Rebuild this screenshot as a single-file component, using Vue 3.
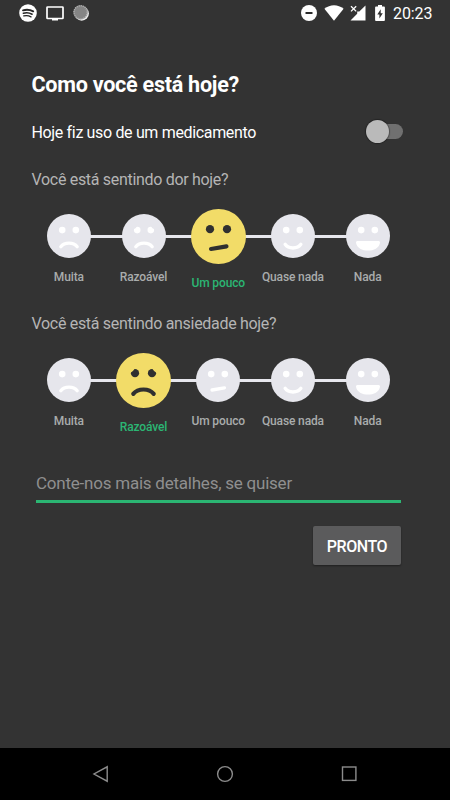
<template>
  <div class="screen">
    <header class="status-bar">
      <div class="status-bar__left">
        <svg class="icon-spotify" viewBox="0 0 18 18">
          <circle cx="9" cy="9" r="8.8" fill="#fff" />
          <g fill="none" stroke="#262626" stroke-linecap="round">
            <path d="M4 6.300c3.500-1 7-.7 10.200 1" stroke-width="1.900" />
            <path d="M4.400 9.200c3-.8 6-.5 8.700 1" stroke-width="1.600" />
            <path d="M4.800 11.900c2.600-.6 5-.3 7.200.9" stroke-width="1.400" />
          </g>
        </svg>
        <svg class="icon-cast" viewBox="0 0 18 15">
          <rect x="1" y="1" width="16" height="11.5" rx="0.6" fill="none" stroke="#fff" stroke-width="1.7" />
          <path d="M6 12h6v2.500H6z" fill="#fff" />
        </svg>
        <svg class="icon-sync" viewBox="0 0 18 18">
          <circle cx="8.700" cy="9.500" r="7.200" fill="#ededed" />
          <circle cx="7.600" cy="8.300" r="7.100" fill="#858585" />
          <circle cx="7.600" cy="8.300" r="6.600" fill="none" stroke="#b5b5b5" stroke-width="1.4" stroke-dasharray="1 1.07" />
        </svg>
      </div>
      <div class="status-bar__right">
        <svg class="icon-dnd" viewBox="0 0 16 16">
          <circle cx="8" cy="8" r="8" fill="#fff" />
          <path d="M4.500 8h7" stroke="#2b2b2b" stroke-width="2" />
        </svg>
        <svg class="icon-wifi" viewBox="0 0 20 16">
          <path d="M.4 3.700C6-1 14-1 19.600 3.700L10 15.700z" fill="#fff" />
        </svg>
        <svg class="icon-signal" viewBox="0 0 16 16">
          <path d="M15.500.5v15H.5l6.700-6.800V6.500h2.100z" fill="#fff" />
          <path d="M1 1.200l5.200 5.200M6.200 1.200L1 6.400" stroke="#fff" stroke-width="1.3" />
        </svg>
        <svg class="icon-battery" viewBox="0 0 10 16">
          <path d="M3 0h4v1.600h2q.9 0 .9.900v12.600q0 .9-.9.900H1q-.9 0-.9-.9V2.500q0-.9.900-.9h2z" fill="#fff" />
          <path d="M5.700 4.200L2.300 9.600h2.100v3.800l3.400-5.200H5.700z" fill="#303030" />
        </svg>
        <span class="clock">20:23</span>
      </div>
    </header>

    <main class="content">
      <h1 class="title">Como você está hoje?</h1>

      <div class="medication">
        <span class="medication__label">Hoje fiz uso de um medicamento</span>
        <button
          class="switch"
          :class="{ 'switch--on': medication }"
          role="switch"
          :aria-checked="medication"
          @click="medication = !medication"
        >
          <span class="switch__thumb"></span>
        </button>
      </div>

      <section v-for="question in questions" :key="question.id" class="question">
        <h2 class="question__title">{{ question.title }}</h2>
        <div class="scale">
          <button
            v-for="(level, index) in levels"
            :key="level.id"
            class="level"
            :class="{ 'level--selected': question.selected === index }"
            @click="question.selected = index"
          >
            <span class="level__face">
              <svg class="face" viewBox="-22 -22 44 44">
                <circle class="face__skin" r="22" />
                <g class="face__eyes">
                  <circle cx="-6.8" cy="-5.9" r="3.3" />
                  <circle cx="6.8" cy="-5.9" r="3.3" />
                </g>
                <path v-if="level.brows" class="face__brows" :d="level.brows" />
                <path :class="level.filled ? 'face__fill' : 'face__line'" :d="level.mouth" />
              </svg>
            </span>
            <span class="level__label">{{ level.label }}</span>
          </button>
        </div>
      </section>

      <input v-model="details" class="details" type="text" placeholder="Conte-nos mais detalhes, se quiser" />

      <div class="actions">
        <button class="submit">PRONTO</button>
      </div>
    </main>

    <nav class="nav-bar">
      <svg viewBox="0 0 18 18"><path d="M15.200 1.800v14.400L2 9z" /></svg>
      <svg viewBox="0 0 18 18"><circle cx="9" cy="9" r="7.4" /></svg>
      <svg viewBox="0 0 18 18"><rect x="2.500" y="2" width="13.4" height="13.4" /></svg>
    </nav>
  </div>
</template>

<script setup>
import { ref } from 'vue';

const medication = ref(false);
const details = ref('');

const sadMouth = 'M-8.200 10.700C-4.500 6 4.500 6 8.200 10.700';

const levels = [
  { id: 'muita', label: 'Muita', mouth: sadMouth },
  {
    id: 'razoavel',
    label: 'Razoável',
    mouth: sadMouth,
    brows: 'M-11.500-5.900Q-7.900-7.100-6.500-10.600L-11.500-11.500zM11.500-5.900Q7.900-7.100 6.500-10.600L11.500-11.500z'
  },
  { id: 'pouco', label: 'Um pouco', mouth: 'M-6 10L6.400 7.900' },
  { id: 'quase', label: 'Quase nada', mouth: 'M-7.900 8.300C-4.500 13.200 4.500 13.200 7.900 8.300' },
  {
    id: 'nada',
    label: 'Nada',
    mouth: 'M-10.600 5.100H10.600Q12.300 5.100 12 6.700C10.500 17.200-10.500 17.200-12 6.700Q-12.300 5.100-10.600 5.100z',
    filled: true
  }
];

const questions = ref([
  { id: 'dor', title: 'Você está sentindo dor hoje?', selected: 2 },
  { id: 'ansiedade', title: 'Você está sentindo ansiedade hoje?', selected: 1 }
]);
</script>

<style>
body {
  margin: 0;
  background: #333333;
}
</style>

<style scoped>
.screen {
  display: flex;
  flex-direction: column;
  width: 450px;
  height: 800px;
  overflow: hidden;
  background: #333333;
  color: #ffffff;
  font-family: Roboto, sans-serif;
}

.screen * {
  box-sizing: border-box;
}

svg {
  display: block;
  flex: none;
}

button {
  border: none;
  padding: 0;
  background: none;
  color: inherit;
  font-family: inherit;
  cursor: pointer;
}

.status-bar {
  display: flex;
  justify-content: space-between;
  height: 26px;
  padding: 0 18px 0 19px;
}

.status-bar__left,
.status-bar__right {
  display: flex;
  align-items: center;
}

.status-bar__left {
  gap: 9px;
}

.icon-spotify,
.icon-sync {
  width: 18px;
  height: 18px;
}

.icon-cast {
  width: 18px;
  height: 15px;
}

.icon-dnd,
.icon-signal {
  width: 16px;
  height: 16px;
}

.icon-wifi {
  width: 20px;
  height: 16px;
  margin-left: 7px;
}

.icon-signal {
  margin-left: 6px;
}

.icon-battery {
  width: 10px;
  height: 16px;
  margin-left: 9px;
}

.clock {
  width: 39px;
  margin-left: 8px;
  padding-top: 2px;
  font-size: 16px;
  letter-spacing: -0.1px;
  line-height: 26px;
  white-space: nowrap;
}

.content {
  flex: 1;
  padding: 42px 45px 0 31.5px;
}

.title {
  margin: 0;
  padding-top: 1px;
  font-size: 21.6px;
  font-weight: 700;
  letter-spacing: -0.28px;
  line-height: 32px;
}

.medication {
  display: flex;
  align-items: center;
  justify-content: space-between;
  height: 32px;
  margin-top: 14px;
  padding-right: 2.5px;
}

.medication__label {
  padding-top: 2px;
  font-size: 16px;
  letter-spacing: -0.34px;
}

.switch {
  display: flex;
  align-items: center;
  width: 35px;
  height: 15px;
  border-radius: 8px;
  background: #707070;
}

.switch__thumb {
  width: 23px;
  height: 23px;
  flex: none;
  margin-left: -2px;
  border-radius: 50%;
  background: #bababa;
  box-shadow: 0 0 1px 1px rgba(0, 0, 0, 0.3);
}

.switch--on {
  justify-content: flex-end;
  background: #1f7a50;
}

.question {
  height: 144px;
  padding-top: 17px;
}

.question__title {
  margin: 0;
  color: #b5b5b5;
  font-size: 16px;
  font-weight: 400;
  letter-spacing: -0.31px;
  line-height: 32px;
}

/* the track runs from the first face to the last one */
.scale {
  display: grid;
  grid-template-columns: repeat(5, 1fr);
  width: 373.5px;
  margin-top: 12px;
  background: linear-gradient(#e7e7ed, #e7e7ed) center 27px / 80% 3px no-repeat;
}

.level {
  display: flex;
  flex-direction: column;
  align-items: center;
}

.level__face {
  display: flex;
  align-items: center;
  justify-content: center;
  height: 56px;
}

.face {
  width: 44px;
  height: 44px;
}

.face__skin {
  fill: #e6e6ec;
}

.face__eyes,
.face__fill {
  fill: #ffffff;
}

.face__line {
  fill: none;
  stroke: #ffffff;
  stroke-width: 3.3;
  stroke-linecap: round;
}

.face__brows {
  fill: #e6e6ec;
}

.level__label {
  margin-top: 5px;
  color: #a9acac;
  font-size: 12px;
  font-weight: 500;
  letter-spacing: -0.14px;
  line-height: 16px;
  white-space: nowrap;
}

.level--selected .face {
  width: 55px;
  height: 55px;
}

.level--selected .face__skin,
.level--selected .face__brows {
  fill: #f2dc68;
}

.level--selected .face__eyes {
  fill: #303030;
}

.level--selected .face__line {
  stroke: #303030;
}

.level--selected .level__label {
  margin-top: 11px;
  color: #2bb673;
}

.details {
  display: block;
  width: 365px;
  height: 38px;
  margin: 30px 0 0 4.5px;
  padding: 0;
  border: none;
  border-bottom: 3px solid #2bb673;
  outline: none;
  background: none;
  color: #ffffff;
  font-family: inherit;
  font-size: 17px;
  letter-spacing: -0.23px;
}

.details::placeholder {
  color: #8f8f8f;
  opacity: 1;
}

.actions {
  display: flex;
  justify-content: flex-end;
  margin-top: 23px;
  padding-right: 4px;
}

.submit {
  width: 88px;
  height: 39px;
  padding-top: 1px;
  border-radius: 2px;
  background: #5b5b5c;
  box-shadow: 0 1px 2px rgba(0, 0, 0, 0.4);
  font-size: 16px;
  font-weight: 500;
  letter-spacing: -0.45px;
}

.nav-bar {
  display: flex;
  align-items: center;
  justify-content: space-between;
  height: 52px;
  padding: 0 92px 0 91.5px;
  background: #000000;
}

.nav-bar svg {
  width: 18px;
  height: 18px;
  fill: none;
  stroke: #8c8c8c;
  stroke-width: 1.4;
}
</style>
